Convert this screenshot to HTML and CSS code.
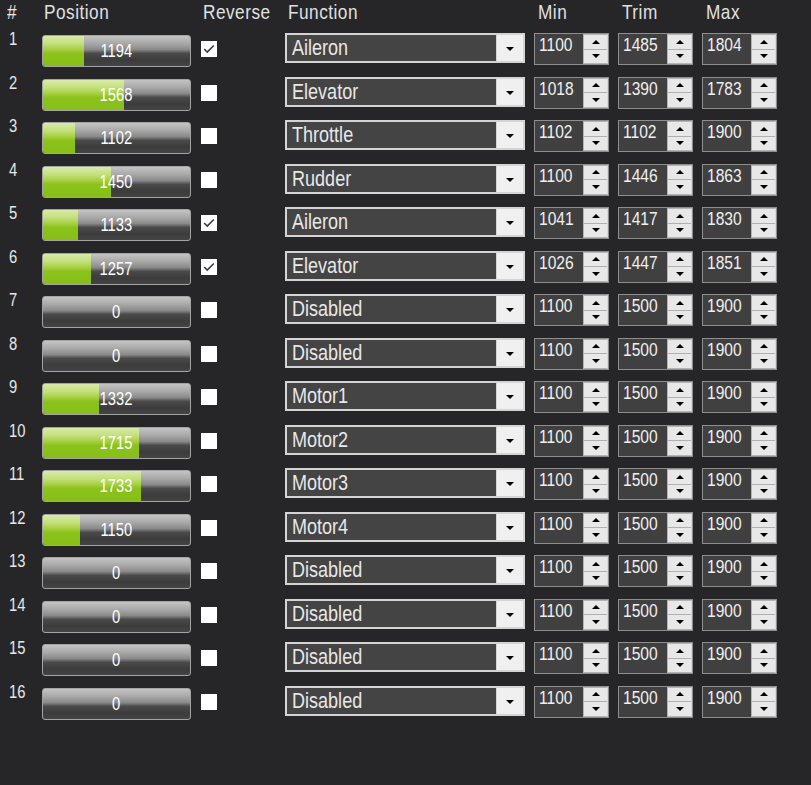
FILE: index.html
```html
<!DOCTYPE html>
<html lang="en">
<head>
    <meta charset="UTF-8">
    <title>Servo Output</title>
    <link rel="stylesheet" href="styles.css">
</head>
<body>
<div class="servo-table">
    <div class="row head">
        <div class="c-num"><span class="n">#</span></div>
        <div class="c-pos"><span class="n">Position</span></div>
        <div class="c-rev"><span class="n">Reverse</span></div>
        <div class="c-func"><span class="n">Function</span></div>
        <div class="c-spin"><span class="n">Min</span></div>
        <div class="c-spin"><span class="n">Trim</span></div>
        <div class="c-spin"><span class="n">Max</span></div>
    </div>
    <div id="rows"></div>
</div>

<script>
    // channel data: value, reversed, function, min, trim, max
    let channels = [
        [1194, true,  'Aileron',  1100, 1485, 1804],
        [1568, false, 'Elevator', 1018, 1390, 1783],
        [1102, false, 'Throttle', 1102, 1102, 1900],
        [1450, false, 'Rudder',   1100, 1446, 1863],
        [1133, true,  'Aileron',  1041, 1417, 1830],
        [1257, true,  'Elevator', 1026, 1447, 1851],
        [0,    false, 'Disabled', 1100, 1500, 1900],
        [0,    false, 'Disabled', 1100, 1500, 1900],
        [1332, false, 'Motor1',   1100, 1500, 1900],
        [1715, false, 'Motor2',   1100, 1500, 1900],
        [1733, false, 'Motor3',   1100, 1500, 1900],
        [1150, false, 'Motor4',   1100, 1500, 1900],
        [0,    false, 'Disabled', 1100, 1500, 1900],
        [0,    false, 'Disabled', 1100, 1500, 1900],
        [0,    false, 'Disabled', 1100, 1500, 1900],
        [0,    false, 'Disabled', 1100, 1500, 1900]
    ];

    let check = '<svg viewBox="0 0 16 16" width="14" height="14"><polyline points="2.5,8 6,11.5 13.5,4" fill="none" stroke="#3a3a3a" stroke-width="1.8"/></svg>';

    function spin(v) {
        return '<div class="spin"><span class="spin-val"><span class="n">' + v + '</span></span>' +
            '<span class="spin-btn"><i class="up"></i><i class="down"></i></span></div>';
    }

    let html = '';
    channels.forEach((ch, i) => {
        let pct = ch[0] > 800 ? (ch[0] - 800) / 1400 * 100 : 0;
        html += '<div class="row">' +
            '<div class="c-num"><span class="n">' + (i + 1) + '</span></div>' +
            '<div class="c-pos"><div class="bar"><div class="fill" style="width:' + pct.toFixed(1) + '%"></div><span class="bar-val"><span class="n">' + ch[0] + '</span></span></div></div>' +
            '<div class="c-rev"><span class="chk">' + (ch[1] ? check : '') + '</span></div>' +
            '<div class="c-func"><div class="combo"><span class="combo-text"><span class="n">' + ch[2] + '</span></span><span class="combo-btn"><i></i></span></div></div>' +
            '<div class="c-spin">' + spin(ch[3]) + '</div>' +
            '<div class="c-spin">' + spin(ch[4]) + '</div>' +
            '<div class="c-spin">' + spin(ch[5]) + '</div>' +
            '</div>';
    });
    document.getElementById('rows').innerHTML = html;
</script>
</body>
</html>
```

FILE: styles.css
```css
* { box-sizing: border-box; }

body {
  margin: 0;
  background: #262628;
  color: #e6e6e6;
  font-family: "Liberation Sans", Arial, sans-serif;
}

/* narrow face: squeeze Arial metrics to a condensed look */
.n {
  display: inline-block;
  transform: scaleX(0.82);
  transform-origin: left center;
  white-space: nowrap;
}

.servo-table {
  padding-left: 7px;
}

.row {
  display: flex;
  align-items: flex-start;
  height: 43.5px;
}

.row.head {
  height: 33px;
  font-size: 21px;
  letter-spacing: 0.6px;
  color: #e0e0e0;
  line-height: 24px;
}

.c-num { width: 35px; flex: none; }
.c-pos { width: 159px; flex: none; }
.c-rev { width: 84px; flex: none; }
.c-func { width: 249px; flex: none; }
.c-spin { width: 84px; flex: none; }

.head .c-pos { padding-left: 2px; }
.head .c-rev { padding-left: 2px; }
.head .c-func { padding-left: 3px; }
.head .c-spin { padding-left: 4px; }

.row .c-num {
  font-size: 18px;
  line-height: 16px;
  padding-left: 2px;
  margin-top: -2px;
  color: #e8e8e8;
}
.head .c-num {
  font-size: 21px;
  line-height: 24px;
  margin-top: 0;
  padding-left: 0;
}

/* position bar */
.bar {
  position: relative;
  width: 149px;
  height: 32px;
  margin-top: 2px;
  border: 1px solid #a4a4a4;
  border-radius: 3px;
  overflow: hidden;
  background: linear-gradient(#c4c4c4 0%, #a8a8a8 25%, #8a8a8a 45%, #4a4a4a 58%, #3c3c3c 80%, #444 100%);
}

.fill {
  height: 100%;
  background: linear-gradient(#d8eaa8 0%, #c4e07c 25%, #a6d040 45%, #8cc21c 58%, #88be18 100%);
}

.bar-val {
  position: absolute;
  left: 0;
  right: 0;
  top: 5px;
  text-align: center;
  font-size: 18px;
  line-height: 20px;
  color: #fff;
}

.bar-val .n {
  transform-origin: center;
}

/* reverse checkbox */
.chk {
  display: flex;
  align-items: center;
  justify-content: center;
  width: 16px;
  height: 16px;
  margin-top: 8px;
  background: #fff;
}

/* function combo */
.combo {
  display: flex;
  width: 240px;
  height: 30px;
  border: 2px solid #d4d4d4;
  background: #444;
}

.combo-text {
  flex: 1;
  font-size: 22px;
  line-height: 26px;
  padding-left: 5px;
  color: #e8e8e8;
  border-right: 1px solid #d4d4d4;
  overflow: hidden;
}

.combo-btn {
  width: 26px;
  background: #f0f0f0;
  display: flex;
  align-items: center;
  justify-content: center;
}

.combo-btn i {
  border-left: 4px solid transparent;
  border-right: 4px solid transparent;
  border-top: 4px solid #000;
  margin-top: 2px;
}

/* spin boxes */
.spin {
  display: flex;
  width: 75px;
  height: 32px;
  border: 1px solid #8e8e8e;
  background: #404040;
}

.spin-val {
  flex: 1;
  font-size: 19px;
  line-height: 21px;
  padding-left: 4px;
  color: #f0f0f0;
  overflow: hidden;
}

.spin-btn {
  width: 25px;
  display: flex;
  flex-direction: column;
  background: #e8e8e8;
  border: 1px solid #b4b4b4;
  border-right-color: #d8d8d8;
}

.spin-btn i {
  flex: 1;
  display: flex;
  align-items: center;
  justify-content: center;
}

.spin-btn i.up {
  border-bottom: 1px solid #b0b0b0;
}

.spin-btn i::after {
  content: "";
  border-left: 4px solid transparent;
  border-right: 4px solid transparent;
}

.spin-btn i.up::after { border-bottom: 4px solid #000; }
.spin-btn i.down::after { border-top: 4px solid #000; }
```
